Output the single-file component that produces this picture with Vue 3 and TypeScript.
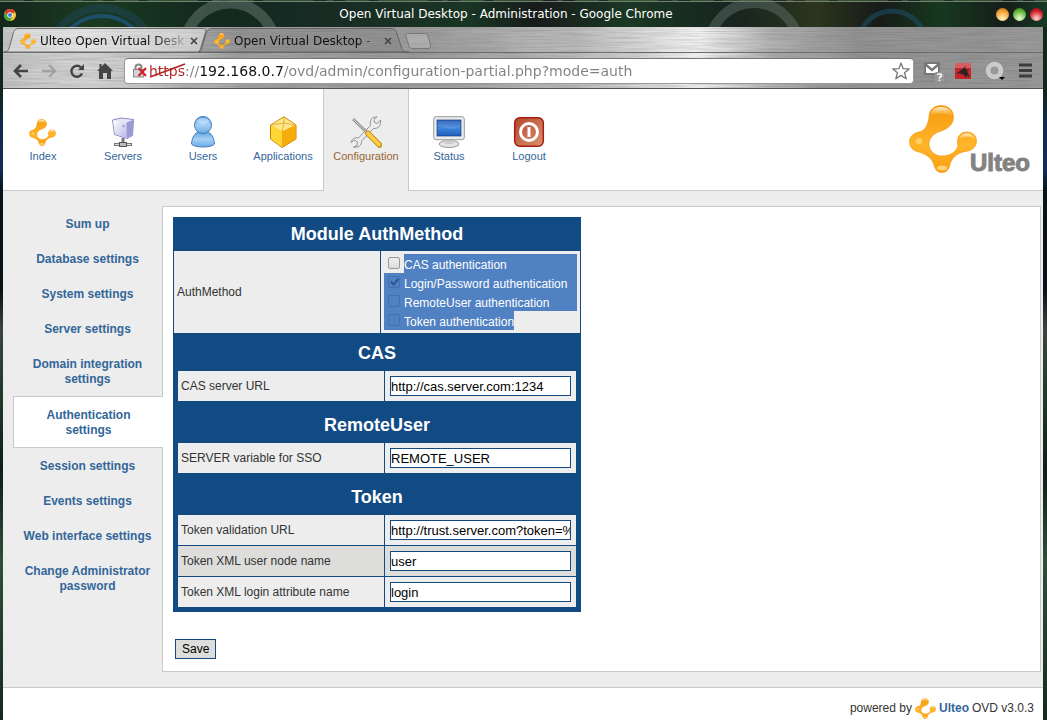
<script setup lang="ts">
import { ref } from 'vue'

interface NavItem { id: string; label: string }
interface Field { id: string; label: string; value: string }
interface Section { title: string; fields: Field[] }

const navItems: NavItem[] = [
  { id: 'index', label: 'Index' },
  { id: 'servers', label: 'Servers' },
  { id: 'users', label: 'Users' },
  { id: 'applications', label: 'Applications' },
  { id: 'configuration', label: 'Configuration' },
  { id: 'status', label: 'Status' },
  { id: 'logout', label: 'Logout' },
]
const activeNav = 'configuration'

const menu: string[] = [
  'Sum up',
  'Database settings',
  'System settings',
  'Server settings',
  'Domain integration settings',
  'Authentication settings',
  'Session settings',
  'Events settings',
  'Web interface settings',
  'Change Administrator password',
]
const activeMenu = 'Authentication settings'

const methods = ref([
  { id: 'cas', label: 'CAS authentication', checked: false },
  { id: 'login', label: 'Login/Password authentication', checked: true },
  { id: 'remote', label: 'RemoteUser authentication', checked: false },
  { id: 'token', label: 'Token authentication', checked: false },
])

const sections = ref<Section[]>([
  { title: 'CAS', fields: [{ id: 'cas-url', label: 'CAS server URL', value: 'http://cas.server.com:1234' }] },
  { title: 'RemoteUser', fields: [{ id: 'sso', label: 'SERVER variable for SSO', value: 'REMOTE_USER' }] },
  {
    title: 'Token',
    fields: [
      { id: 'token-url', label: 'Token validation URL', value: 'http://trust.server.com?token=%TOKEN%' },
      { id: 'token-user', label: 'Token XML user node name', value: 'user' },
      { id: 'token-login', label: 'Token XML login attribute name', value: 'login' },
    ],
  },
])

const address = ref('https://192.168.0.7/ovd/admin/configuration-partial.php?mode=auth')
</script>

<template>
  <div class="desktop">
    <svg class="defs" width="0" height="0" aria-hidden="true">
      <defs>
        <linearGradient id="gold" x1="0" y1="0" x2="0" y2="1">
          <stop offset="0" stop-color="#f59a10" />
          <stop offset=".25" stop-color="#f9a61a" />
          <stop offset=".6" stop-color="#ffb52a" />
          <stop offset="1" stop-color="#f99d12" />
        </linearGradient>
        <linearGradient id="shine" x1="0" y1="0" x2="0" y2="1">
          <stop offset="0" stop-color="#fff" stop-opacity=".85" />
          <stop offset="1" stop-color="#ffd45a" stop-opacity=".1" />
        </linearGradient>
        <linearGradient id="blue" x1="0" y1="0" x2="0" y2="1">
          <stop offset="0" stop-color="#5a9fe0" />
          <stop offset=".5" stop-color="#a5d0f5" />
          <stop offset="1" stop-color="#6aace8" />
        </linearGradient>
        <linearGradient id="lavender" x1="0" y1="0" x2="1" y2="1">
          <stop offset="0" stop-color="#ffffff" />
          <stop offset="1" stop-color="#b9b8e6" />
        </linearGradient>
        <linearGradient id="screen" x1="0" y1="0" x2="0" y2="1">
          <stop offset="0" stop-color="#1c52b0" />
          <stop offset=".5" stop-color="#3f86dc" />
          <stop offset="1" stop-color="#1d5cbc" />
        </linearGradient>
        <linearGradient id="rust" x1="0" y1="0" x2="1" y2="1">
          <stop offset="0" stop-color="#b5482c" />
          <stop offset="1" stop-color="#dc9070" />
        </linearGradient>
        <symbol id="ulteo" viewBox="0 0 68 68">
          <path fill="url(#gold)" stroke="#f39200" stroke-width=".6" d="M32 .5C39 .5 44.500 5 44.500 12C44.500 20 38 24 32 26C25 28 20 33 20 39C20 46 26 51 33 51C41 51 47 47 49 41C47 32 51 27 58 27C64 27 67.500 31 67.500 36C67.500 42 63 46 56 46.500C48 48 43 53 41 59C40 65 37 67.500 33 67.500C28 67.500 26 64 25 60C23 53 17 49 10 47C4 46 .5 42 .5 37C.5 31 5 28 10 27C16 26 19 20 20 12C20 5 25 .5 32 .5Z" />
          <path fill="url(#shine)" d="M22 10C22 4 27 2 32 2C38 2 43 5 43 11C38 8 27 8 22 10Z" />
          <path fill="url(#shine)" d="M51 34C51 30 55 28.500 58 28.500C62 28.500 66 31 66 35C61 31 55 31 51 34Z" />
          <circle cx="10" cy="36" r="3" fill="#ffe08a" opacity=".7" />
          <ellipse cx="33" cy="63" rx="5" ry="2.500" fill="#ffe08a" opacity=".8" />
        </symbol>
        <filter id="brush" x="0" y="0" width="100%" height="100%">
          <feTurbulence type="fractalNoise" baseFrequency="0.02 0.9" numOctaves="3" seed="4" />
          <feColorMatrix values="0 0 0 0 0.1  0 0 0 0 0.1  0 0 0 0 0.1  1.400 0 0 0 -0.5" />
        </filter>
      </defs>
    </svg>

    <header class="titlebar">
      <svg class="title-art" viewBox="0 0 1047 27" preserveAspectRatio="none" aria-hidden="true">
        <g fill="none">
          <circle cx="102" cy="62" r="54" stroke="#1d4c63" stroke-width="8" opacity=".4" />
          <circle cx="102" cy="62" r="46" stroke="#1f5f9c" stroke-width="4" opacity=".6" />
          <circle cx="230" cy="48" r="45" stroke="#8a978f" stroke-width="11" opacity=".38" />
          <circle cx="754" cy="48" r="45" stroke="#6f8077" stroke-width="10" opacity=".4" />
          <circle cx="892" cy="45" r="34" stroke="#1d5470" stroke-width="5" opacity=".5" />
        </g>
        <path d="M0 0H1047" stroke="#4e7b3f" stroke-width="1" stroke-dasharray="24 9 50 14 6 12" />
        <path d="M0 1.500H1047" stroke="#747d76" />
      </svg>
      <svg class="chrome" viewBox="0 0 24 24" aria-hidden="true">
        <circle cx="12" cy="12" r="12" fill="#fbc72c" />
        <path d="M1.600 6A12 12 0 0 1 22.400 6L12 12L7 15Z" fill="#dc3b2c" />
        <path d="M1.600 6A12 12 0 0 0 12 24L17 15L7 15Z" fill="#3aa348" />
        <circle cx="12" cy="12" r="5.500" fill="#fff" /><circle cx="12" cy="12" r="4.200" fill="#3f7fd0" />
      </svg>
      <h1>Open Virtual Desktop - Administration - Google Chrome</h1>
      <div class="window-buttons">
        <button class="orb orange" aria-label="Minimize"></button>
        <button class="orb green" aria-label="Maximize"></button>
        <button class="orb red" aria-label="Close"></button>
      </div>
    </header>

    <div class="window">
      <div class="metal">
        <svg class="grain" width="100%" height="100%" aria-hidden="true"><rect width="100%" height="100%" filter="url(#brush)" /></svg>
        <div class="tabs">
          <div class="tab first">
            <svg class="tab-shape" viewBox="0 0 204 26" aria-hidden="true"><path d="M0 25C4 25 5 22 6 18L9 7C10 3 12 1.500 15 1.500H199C203 1.500 202 4 201 7L197 20C196 24 195 25 193 25Z" fill="#fff" fill-opacity=".35" stroke="#6a6a6a" /></svg>
            <svg class="favicon" aria-hidden="true"><use href="#ulteo" /></svg>
            <button class="tab-title">Ulteo Open Virtual Desk</button>
            <button class="close" aria-label="Close tab"><svg viewBox="0 0 8 8"><path d="M1 1L7 7M7 1L1 7" stroke="#444" stroke-width="1.600" /></svg></button>
          </div>
          <div class="tab second">
            <svg class="tab-shape" viewBox="0 0 212 26" aria-hidden="true"><path d="M0 25C4 25 4 20 5 17L8 7C9 3 11 1.500 14 1.500H193C197 1.500 198 3 199 7L203 19C204 23 205 25 211 25Z" fill="#333" fill-opacity=".1" stroke="#626262" /></svg>
            <svg class="favicon" aria-hidden="true"><use href="#ulteo" /></svg>
            <button class="tab-title">Open Virtual Desktop -</button>
            <button class="close" aria-label="Close tab"><svg viewBox="0 0 8 8"><path d="M1 1L7 7M7 1L1 7" stroke="#444" stroke-width="1.600" /></svg></button>
          </div>
          <button class="new-tab" aria-label="New tab"><svg viewBox="0 0 26 16"><path d="M3 .5H19C21 .5 22 1 23 3L25.500 12C26 14 25 15.500 23 15.500H8C6 15.500 5 15 4 13L.8 3C.5 1.500 1 .5 3 .5Z" fill="#fff" fill-opacity=".2" stroke="#777" /></svg></button>
        </div>
        <div class="toolbar">
          <button class="tool" aria-label="Back"><svg viewBox="0 0 16 16"><path d="M15 8H3M8 2L2 8L8 14" fill="none" stroke="#444" stroke-width="2.600" /></svg></button>
          <button class="tool" aria-label="Forward"><svg viewBox="0 0 16 16"><path d="M1 8H13M8 2L14 8L8 14" fill="none" stroke="#a2a2a2" stroke-width="2.400" /></svg></button>
          <button class="tool" aria-label="Reload"><svg viewBox="0 0 16 16"><path d="M13 10.500A5.500 5.500 0 1 1 12 4.500" fill="none" stroke="#444" stroke-width="2.400" /><path d="M15 1V7H9Z" fill="#444" /></svg></button>
          <button class="tool" aria-label="Home"><svg viewBox="0 0 16 16"><path d="M8 0L16 8H14V16H10V10H6V16H2V8H0L2.500 5.500V1H4.500V3.500Z" fill="#444" /></svg></button>
          <div class="omnibox">
            <svg class="lock" viewBox="0 0 15 15" aria-hidden="true">
              <path d="M3.500 7V4.500A3 3 0 0 1 9.500 4.500V7" fill="none" stroke="#888" stroke-width="2" />
              <rect x="1.500" y="6.500" width="10" height="7.500" fill="#d4d4d4" stroke="#888" />
              <path d="M6.500 5L14 13M14 5L6.500 13" stroke="#d3202c" stroke-width="2.200" />
            </svg>
            <div class="address">
              <input v-model="address" aria-label="Address" spellcheck="false" />
              <svg class="strike" viewBox="0 0 37 18" aria-hidden="true"><path d="M1 16L36 3" stroke="#b32424" stroke-width="1.800" /></svg>
            </div>
            <button class="star" aria-label="Bookmark"><svg viewBox="0 0 18 18"><path d="M9 1L11.200 6.700L17.200 7L12.500 10.800L14.200 16.800L9 13.400L3.800 16.800L5.500 10.800L.8 7L6.800 6.700Z" fill="#fff" stroke="#777" stroke-width="1.300" stroke-linejoin="round" /></svg></button>
          </div>
          <button class="ext mail" aria-label="Mail"><svg viewBox="0 0 22 22">
            <rect x="1" y="2" width="16" height="13" rx="1" fill="#777" /><path d="M3 4H15V13H3Z" fill="#fff" /><path d="M2 4L9 10L16 4" fill="none" stroke="#777" stroke-width="2.400" />
            <rect x="12" y="12" width="9" height="10" rx="1" fill="#999" /><path d="M14.500 15Q14.500 14 16.500 14Q18.500 14 18.500 15.500Q18.500 16.500 16.500 17.500V18.500M16.500 19.500V21" fill="none" stroke="#fff" stroke-width="1.500" />
          </svg></button>
          <button class="ext red-ext" aria-label="Extension"><svg viewBox="0 0 16 16"><rect width="16" height="16" rx="1" fill="#c5252a" /><rect width="16" height="5" fill="#dd8484" opacity=".6" /><path d="M1 11L11 3L10 6L14 7L12 8L15 15L12 12L11 15L8 11L6 12V10Z" fill="#322" /></svg></button>
          <button class="ext ring-ext" aria-label="Proxy"><svg viewBox="0 0 20 20"><circle cx="9.500" cy="9.500" r="6.500" fill="#999" stroke="#cbcbcb" stroke-width="5" /><circle cx="9.500" cy="9.500" r="9.300" fill="none" stroke="#8b8b8b" stroke-width=".6" /><path d="M14 16H20L17 19Z" fill="#000" /></svg></button>
          <button class="ext menu-ext" aria-label="Menu"><svg viewBox="0 0 13 15"><path d="M0 2H13M0 7.500H13M0 13H13" stroke="#3d3d3d" stroke-width="3" /></svg></button>
        </div>
      </div>

      <div class="page">
        <nav class="top">
          <a v-for="item in navItems" :key="item.id" href="#" :class="['nav', { active: item.id === activeNav }]">
            <svg v-if="item.id === 'index'" class="icon" viewBox="0 0 32 32"><use href="#ulteo" x="2" y="3" width="27" height="27" /></svg>
            <svg v-else-if="item.id === 'servers'" class="icon" viewBox="0 0 32 32">
              <path d="M16 22V27M7 28.500H25" stroke="#777" stroke-width="3" /><path d="M8 28.500H24" stroke="#ddd" stroke-width="1" /><rect x="12.500" y="26.500" width="7" height="4" fill="#bbb" stroke="#555" />
              <path d="M5.500 4L14 2L26.500 3.500L25.500 19.500L20 22.500L7.500 18.500Z" fill="#e6e6fa" stroke="#8c8cc0" />
              <path d="M6 4.500L19.500 6.500V22L8 18Z" fill="url(#lavender)" /><path d="M19.500 6.500L26 4V19L19.500 22Z" fill="#9c9ad2" /><circle cx="16.500" cy="10" r="1" fill="#8e8cc8" />
            </svg>
            <svg v-else-if="item.id === 'users'" class="icon" viewBox="0 0 32 32">
              <path d="M4.500 28C5 21 8 17 12 15.500H20C24 17 27 21 27.500 28C25 32 7 32 4.500 28Z" fill="url(#blue)" stroke="#3f7db8" />
              <circle cx="16" cy="9" r="8.500" fill="url(#blue)" stroke="#3f7db8" /><ellipse cx="16" cy="5" rx="6" ry="3" fill="#fff" opacity=".4" />
            </svg>
            <svg v-else-if="item.id === 'applications'" class="icon" viewBox="0 0 32 32">
              <path d="M17 .8L29 9V23L15 31.500L3.500 23V9Z" fill="#ffc51e" stroke="#c98300" />
              <path d="M17 1.500L28.500 9L15 15.500L4 9Z" fill="#ffe78a" /><path d="M4 9L15 15.500V31L4 23Z" fill="#ffd633" /><path d="M15 15.500L28.500 9V23L15 31Z" fill="#f8ac0c" /><path d="M4 9L17 7L28.500 9M17 1.500V7L15 15.500" fill="none" stroke="#d89b17" stroke-width=".7" />
            </svg>
            <svg v-else-if="item.id === 'configuration'" class="icon" viewBox="0 0 32 32">
              <path d="M23 1.500C21 3 19.500 6 20.500 9.500L8.500 22C5 21 1.500 23 1 26.500L4.500 24L7.500 26L7 29.500L3.500 31C8 32 12 29.500 11.500 25L23.500 12.500C28 13 31.500 9.500 30.500 4L27.500 7.500L24.500 6.500L24 3.500L27 .8Z" fill="#eee" stroke="#888" stroke-width=".9" />
              <path d="M3 3L18 17.500" stroke="#888" stroke-width="2.600" /><path d="M3 3L18 17.500" stroke="#ddd" stroke-width="1" /><path d="M18 17.500L29.500 29" stroke="#c58a12" stroke-width="5.500" stroke-linecap="round" /><path d="M18 17.500L29 28.500" stroke="#ffd044" stroke-width="3.800" stroke-linecap="round" />
            </svg>
            <svg v-else-if="item.id === 'status'" class="icon" viewBox="0 0 32 32">
              <ellipse cx="16" cy="28" rx="10" ry="3.500" fill="#e4e4e4" stroke="#999" /><path d="M12 23H20V28H12Z" fill="#ccc" />
              <rect x=".7" y=".7" width="30.600" height="23" rx="2.500" fill="#ececec" stroke="#999" /><rect x="4" y="4" width="24" height="16" fill="url(#screen)" stroke="#163f84" stroke-width=".7" /><path d="M4.500 4.500H27.500V11Q16 15 4.500 10Z" fill="#fff" opacity=".13" />
            </svg>
            <svg v-else class="icon" viewBox="0 0 32 32">
              <rect x="1.700" y="1.700" width="28.600" height="28.600" rx="5" fill="url(#rust)" stroke="#a51e12" stroke-width="1.500" />
              <circle cx="16" cy="16" r="8.500" fill="none" stroke="#fff" stroke-width="3" /><path d="M16 11V21" stroke="#fff" stroke-width="3" />
            </svg>
            <span>{{ item.label }}</span>
          </a>
          <div class="brand">
            <svg class="brand-mark" aria-hidden="true"><use href="#ulteo" /></svg>
            <strong>Ulteo</strong>
          </div>
        </nav>

        <div class="body">
          <nav class="side">
            <a v-for="m in menu" :key="m" href="#" :class="{ active: m === activeMenu }"><span>{{ m }}</span></a>
          </nav>
          <main>
            <form @submit.prevent>
              <div class="module">
                <table class="methods">
                  <colgroup><col class="name" /><col /></colgroup>
                  <thead><tr><th colspan="2">Module AuthMethod</th></tr></thead>
                  <tbody>
                    <tr>
                      <td>AuthMethod</td>
                      <td>
                        <div v-for="m in methods" :key="m.id" :class="['method', m.id]">
                          <span class="tick"><input :id="m.id" v-model="m.checked" type="checkbox" /></span>
                          <label :for="m.id">{{ m.label }}</label>
                        </div>
                      </td>
                    </tr>
                  </tbody>
                </table>
                <table v-for="s in sections" :key="s.title" class="section">
                  <colgroup><col class="name" /><col /></colgroup>
                  <thead><tr><th colspan="2">{{ s.title }}</th></tr></thead>
                  <tbody>
                    <tr v-for="f in s.fields" :key="f.id">
                      <td><label :for="f.id">{{ f.label }}</label></td>
                      <td><input :id="f.id" v-model="f.value" type="text" spellcheck="false" /></td>
                    </tr>
                  </tbody>
                </table>
              </div>
              <button class="save" type="submit">Save</button>
            </form>
          </main>
        </div>

        <footer>
          <span>powered by</span>
          <svg class="foot-mark" aria-hidden="true"><use href="#ulteo" /></svg>
          <a href="#">Ulteo</a>
          <span>OVD v3.0.3</span>
        </footer>
      </div>
    </div>
  </div>
</template>

<style>
body { margin: 0; }
</style>

<style scoped>
* { box-sizing: border-box; }
button { border: 0; padding: 0; background: none; font: inherit; color: inherit; }
svg { display: block; }
a { color: #336699; text-decoration: none; }
.defs { position: absolute; }
.desktop {
  min-height: 100vh;
  display: flex;
  flex-direction: column;
  background: linear-gradient(#12291c 0, #12241c 90px, #0d2c48 120px, #102e55 170px, #081418 190px, #0a1216 290px, #3c4540 330px, #1c3a28 400px, #101c18 470px, #2c5038 560px, #16291f 100%);
  font-family: "Liberation Sans", Arial, sans-serif;
}
.titlebar {
  position: relative;
  display: flex;
  align-items: center;
  height: 27px;
  padding: 2px 4px 0;
  background: linear-gradient(90deg, #14271c, #1a3a20 9%, #12291f 20%, #182c24 32%, #193523 45%, #171b1b 51%, #1a3823 60%, #172420 70%, #2b351e 78%, #171b18 84%, #17381f 90%, #151d19 96%, #163a24);
}
.title-art { position: absolute; left: 0; top: 0; width: 100%; height: 27px; }
.chrome { position: relative; width: 12px; height: 12px; }
h1 {
  position: relative;
  flex: 1;
  margin: 0 0 2px;
  color: #fff;
  font: 12px/16px "DejaVu Sans", sans-serif;
  text-align: center;
}
.window-buttons { position: relative; display: flex; gap: 4px; }
.orb { width: 13px; height: 13px; border-radius: 50%; }
.orange { background: radial-gradient(circle at 50% 80%, #fff3c8, #f5a030 60%, #a85a10); }
.green { background: radial-gradient(circle at 50% 80%, #efffd8, #66b63a 60%, #2a6a16); }
.red { background: radial-gradient(circle at 50% 80%, #ffdada, #d22028 60%, #7a0a10); }

.window { flex: 1; display: flex; flex-direction: column; margin: 0 4px 0 3px; }
.metal {
  position: relative;
  border-bottom: 1px solid #555;
  background: linear-gradient(90deg, #c6c6c6, #d6d6d6 8%, #bdbdbd 17%, #a0a0a0 23%, #9c9c9c 40%, #bcbcbc 55%, #f2f2f2 67%, #b0b0b0 74%, #939393 82%, #999 100%);
}
.grain { position: absolute; left: 0; top: 0; opacity: .35; }
.tabs { position: relative; display: flex; height: 26px; border-bottom: 1px solid #6c6c6c; }
.tab { position: relative; display: flex; align-items: center; height: 26px; font: 12px/16px "DejaVu Sans", sans-serif; color: #111; }
.first { width: 194px; padding-left: 17px; }
.second { width: 208px; padding-left: 17px; }
.tab-shape { position: absolute; left: 1px; top: 0; height: 26px; }
.favicon { position: relative; flex: none; width: 16px; height: 16px; margin-top: 2px; }
.tab-title {
  position: relative;
  margin: 2px 0 0 4px;
  white-space: nowrap;
  mask-image: linear-gradient(90deg, #000 78%, rgba(0, 0, 0, .2));
}
.second .tab-title { mask-image: linear-gradient(90deg, #000 90%, rgba(0, 0, 0, .5)); }
.close { position: relative; flex: none; width: 8px; height: 8px; margin: 2px 0 0 auto; }
.first .close { margin-right: -1px; }
.second .close { margin-right: 13px; }
.new-tab { width: 26px; height: 16px; margin-top: 6px; }
.toolbar { position: relative; display: flex; align-items: center; height: 35px; padding: 0 11px 0 10px; }
.tool { width: 16px; height: 16px; margin-right: 12px; }
.tool:nth-child(4) { margin-right: 11px; }
.omnibox {
  flex: 1;
  display: flex;
  align-items: center;
  height: 26px;
  padding: 0 3px 0 7px;
  border: 1px solid #999;
  border-top-color: #777;
  border-radius: 4px;
  background: #fff;
}
.lock { flex: none; width: 15px; height: 15px; }
.address { position: relative; flex: 1; margin-left: 2px; }
.address input {
  display: block;
  width: 100%;
  height: 22px;
  padding: 0;
  border: 0;
  outline: 0;
  font: 14px/22px "DejaVu Sans", sans-serif;
  color: transparent;
  background: linear-gradient(90deg, #b32424 37px, #808080 37px, #808080 51px, #111 51px, #111 135px, #808080 135px);
  background-clip: text;
}
.strike { position: absolute; left: 0; top: 1px; width: 37px; height: 18px; }
.star { width: 18px; height: 18px; }
.mail { width: 22px; height: 22px; margin-left: 9px; }
.red-ext { width: 16px; height: 16px; margin-left: 10px; }
.ring-ext { width: 20px; height: 20px; margin-left: 14px; }
.menu-ext { width: 13px; height: 15px; margin-left: 14px; }

.page { flex: 1; display: flex; flex-direction: column; background: #ededed; color: #333; }
.top { display: flex; height: 102px; background: #fff; border-bottom: 1px solid #c9c9c9; }
.nav {
  display: flex;
  flex-direction: column;
  align-items: center;
  width: 80px;
  height: 102px;
  padding-top: 27px;
  font-size: 11px;
  line-height: 16px;
}
.nav.active { width: 86px; color: #996633; background: #ededed; border: solid #c9c9c9; border-width: 0 1px; }
.icon { width: 32px; height: 32px; }
.brand { display: flex; margin: 16px 13px 0 auto; }
.brand-mark { width: 68px; height: 68px; }
.brand strong {
  align-self: flex-start;
  margin: 45px 0 0 -7px;
  font-size: 24px;
  line-height: 26px;
  color: #828282;
  -webkit-text-stroke: 1px #828282;
}
.body { display: flex; padding: 15px 2px 15px 10px; }
.side { flex: none; width: 149px; }
.side a {
  display: flex;
  justify-content: center;
  padding: 11px 8px 9px;
  font-size: 12px;
  line-height: 15px;
  font-weight: bold;
  text-align: center;
}
.side a.active {
  position: relative;
  margin-right: -1px;
  padding: 11px 30px 9px;
  background: #fff;
  border: 1px solid #c9c9c9;
  border-right: 0;
}
main { flex: 1; min-width: 0; padding: 10px 10px 12px; background: #fff; border: 1px solid #c9c9c9; }
.module { width: 408px; padding-bottom: 1px; background: #124a84; }
table { border-spacing: 0; table-layout: fixed; font-size: 12px; line-height: 15px; }
.name { width: 206px; }
td { padding: 0 3px; background: #ededed; }
td + td { border-left: 1px solid #124a84; }
th { padding: 2px 0 0; font-size: 18px; line-height: 22px; color: #fff; }
.methods { width: 406px; margin: 0 1px; }
.methods th { height: 34px; padding: 0; }
.methods td { height: 82px; }
.method { display: flex; height: 19px; }
.tick { flex: none; width: 20px; padding: 3px 4px; background: #4f81c3; }
.method label { flex: 1; padding-top: 4px; line-height: 15px; color: #fff; background: #4f81c3; white-space: nowrap; }
.cas .tick { background: none; }
.token label { flex: none; }
.tick input {
  appearance: none;
  display: block;
  width: 12px;
  height: 12px;
  margin: 0;
  border: 1px solid #456fae;
  border-radius: 2px;
}
.cas .tick input { border-color: #999; background: linear-gradient(#f0f0f0, #dcdcdc); }
.tick input:checked::after {
  content: "";
  display: block;
  width: 3px;
  height: 6px;
  margin: 0 0 0 3px;
  border: solid #2c5695;
  border-width: 0 2px 2px 0;
  transform: rotate(40deg);
}
.section { width: 398px; margin: 0 5px 4px; }
.section th { height: 38px; }
.section td { height: 30px; }
.section tr + tr td { height: 31px; border-top: 1px solid #124a84; }
.section tr:nth-child(2) td { background: #dddddb; }
.section td + td { padding: 0 5px; }
.section td input {
  display: block;
  width: 100%;
  height: 20px;
  padding: 0;
  border: 1px solid #124a84;
  background: #fff;
  color: #000;
  font: 13px/18px "Liberation Sans", Arial, sans-serif;
}
.save {
  display: block;
  height: 20px;
  margin: 27px 0 0 2px;
  padding: 0 6px;
  border: 1px solid #124a84;
  background: #dddddb;
  color: #000;
  font-size: 12px;
}
footer {
  flex: 1;
  display: flex;
  align-items: center;
  justify-content: flex-end;
  gap: 3px;
  min-height: 33px;
  padding: 8px 9px 0 0;
  border-top: 1px solid #c9c9c9;
  background: #fff;
  font-size: 12px;
  line-height: 15px;
}
footer a { font-weight: bold; }
.foot-mark { width: 21px; height: 21px; }
</style>
